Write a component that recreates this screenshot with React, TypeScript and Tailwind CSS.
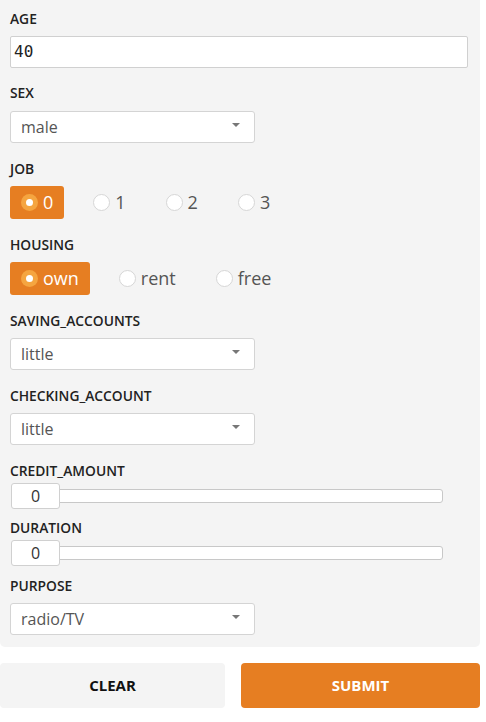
import React from "react";

const font = { fontFamily: '"Open Sans", "Liberation Sans", sans-serif' };

function Label({ children, mb = "mb-[7px]" }: { children: React.ReactNode; mb?: string }) {
  return (
    <div className={`text-[13.8px] leading-[20px] font-semibold text-[#222] ${mb}`}>{children}</div>
  );
}

function Select({ value }: { value: string }) {
  return (
    <div className="relative flex h-[32px] w-[245px] items-center rounded-[3px] border border-[#d4d4d4] bg-white pl-[10px] text-[16px] text-[#555]">
      {value}
      <svg className="absolute right-[14px] top-[11px]" width="8" height="4" viewBox="0 0 8 4">
        <path d="M0 0H8L4 4Z" fill="#777" />
      </svg>
    </div>
  );
}

function Radio({ label, selected }: { label: string; selected?: boolean }) {
  return (
    <div
      className={`flex h-[33px] items-center gap-[5px] rounded-[3px] pl-[11px] pr-[11px] text-[18px] ${
        selected ? "bg-[#e67e22] text-white" : "text-[#555]"
      }`}
    >
      {selected ? (
        <span className="flex h-[17px] w-[17px] items-center justify-center rounded-full bg-[#f5a540]">
          <span className="h-[7px] w-[7px] rounded-full bg-white" />
        </span>
      ) : (
        <span className="h-[17px] w-[17px] rounded-full border border-[#d6d6d6] bg-white" />
      )}
      <span>{label}</span>
    </div>
  );
}

function Slider() {
  return (
    <div className="flex h-[26px] items-center pl-[1px]">
      <div className="relative z-10 flex h-[26px] w-[49px] items-center justify-center rounded-[3px] border border-[#d0d0d0] bg-white text-[16px] text-[#333]">
        0
      </div>
      <div className="-ml-[1px] h-[14px] w-[384px] rounded-r-[3px] border border-[#c8c8c8] bg-white" />
    </div>
  );
}

export default function App() {
  return (
    <div className="min-h-[722px] w-[486px] bg-white" style={font}>
      <div className="w-[480px] rounded-b-[5px] bg-[#f4f4f4] pb-[12px] pl-[10px] pt-[9px]">
        <div>
          <Label>AGE</Label>
          <div
            className="flex h-[32px] w-[458px] items-center rounded-[2px] border border-[#d0d0d0] bg-white pl-[3px] text-[16px] text-[#222]"
            style={{ fontFamily: '"DejaVu Sans Mono", "Liberation Mono", monospace' }}
          >
            40
          </div>
        </div>
        <div className="mt-[15px]">
          <Label mb="mb-[8px]">SEX</Label>
          <Select value="male" />
        </div>
        <div className="mt-[16px]">
          <Label>JOB</Label>
          <div className="flex gap-[18px]">
            <Radio label="0" selected />
            <Radio label="1" />
            <Radio label="2" />
            <Radio label="3" />
          </div>
        </div>
        <div className="mt-[16px]">
          <Label>HOUSING</Label>
          <div className="flex gap-[18px]">
            <Radio label="own" selected />
            <Radio label="rent" />
            <Radio label="free" />
          </div>
        </div>
        <div className="mt-[16px]">
          <Label>SAVING_ACCOUNTS</Label>
          <Select value="little" />
        </div>
        <div className="mt-[16px]">
          <Label>CHECKING_ACCOUNT</Label>
          <Select value="little" />
        </div>
        <div className="mt-[16px]">
          <Label mb="mb-[2px]">CREDIT_AMOUNT</Label>
          <Slider />
        </div>
        <div className="mt-[9px]">
          <Label mb="mb-[2px]">DURATION</Label>
          <Slider />
        </div>
        <div className="mt-[10px]">
          <Label>PURPOSE</Label>
          <Select value="radio/TV" />
        </div>
      </div>
      <div className="mt-[16px] flex w-[480px] gap-[16px]">
        <button className="flex h-[45px] w-[225px] items-center justify-center rounded-[4px] bg-[#f4f4f4] text-[15px] font-bold text-[#111]">
          CLEAR
        </button>
        <button className="flex h-[45px] flex-1 items-center justify-center rounded-[4px] bg-[#e67e22] text-[15px] font-bold text-white">
          SUBMIT
        </button>
      </div>
    </div>
  );
}
